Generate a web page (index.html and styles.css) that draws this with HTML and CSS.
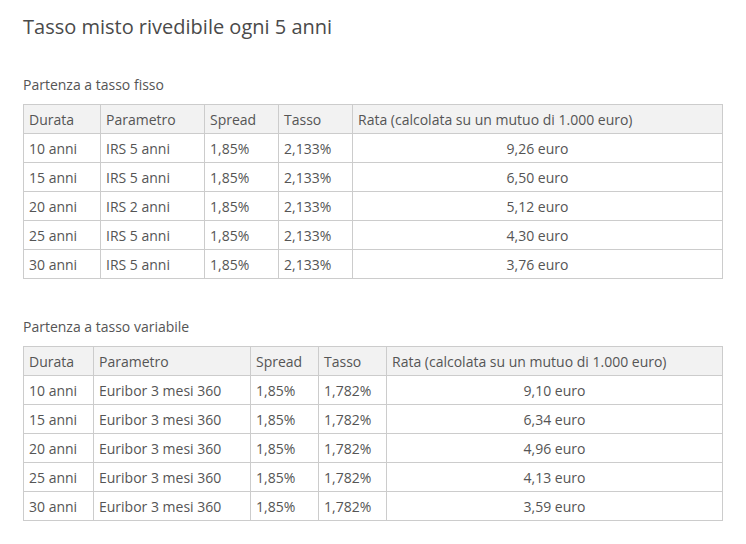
FILE: index.html
```html
<!DOCTYPE html>
<html lang="it">
<head>
<meta charset="utf-8">
<title>Tasso misto rivedibile ogni 5 anni</title>
<link rel="stylesheet" href="styles.css">
</head>
<body>
<main class="page">
  <h2 class="title">Tasso misto rivedibile ogni 5 anni</h2>

  <p class="caption caption-first">Partenza a tasso fisso</p>
  <table class="rates rates-fisso">
    <colgroup>
      <col class="c-durata"><col class="c-param"><col class="c-spread"><col class="c-tasso"><col class="c-rata">
    </colgroup>
    <thead>
      <tr><th>Durata</th><th>Parametro</th><th>Spread</th><th>Tasso</th><th>Rata (calcolata su un mutuo di 1.000 euro)</th></tr>
    </thead>
    <tbody>
      <tr><td>10 anni</td><td>IRS 5 anni</td><td>1,85%</td><td>2,133%</td><td class="num">9,26 euro</td></tr>
      <tr><td>15 anni</td><td>IRS 5 anni</td><td>1,85%</td><td>2,133%</td><td class="num">6,50 euro</td></tr>
      <tr><td>20 anni</td><td>IRS 2 anni</td><td>1,85%</td><td>2,133%</td><td class="num">5,12 euro</td></tr>
      <tr><td>25 anni</td><td>IRS 5 anni</td><td>1,85%</td><td>2,133%</td><td class="num">4,30 euro</td></tr>
      <tr><td>30 anni</td><td>IRS 5 anni</td><td>1,85%</td><td>2,133%</td><td class="num">3,76 euro</td></tr>
    </tbody>
  </table>

  <p class="caption caption-second">Partenza a tasso variabile</p>
  <table class="rates rates-variabile">
    <colgroup>
      <col class="c-durata"><col class="c-param"><col class="c-spread"><col class="c-tasso"><col class="c-rata">
    </colgroup>
    <thead>
      <tr><th>Durata</th><th>Parametro</th><th>Spread</th><th>Tasso</th><th>Rata (calcolata su un mutuo di 1.000 euro)</th></tr>
    </thead>
    <tbody>
      <tr><td>10 anni</td><td>Euribor 3 mesi 360</td><td>1,85%</td><td>1,782%</td><td class="num">9,10 euro</td></tr>
      <tr><td>15 anni</td><td>Euribor 3 mesi 360</td><td>1,85%</td><td>1,782%</td><td class="num">6,34 euro</td></tr>
      <tr><td>20 anni</td><td>Euribor 3 mesi 360</td><td>1,85%</td><td>1,782%</td><td class="num">4,96 euro</td></tr>
      <tr><td>25 anni</td><td>Euribor 3 mesi 360</td><td>1,85%</td><td>1,782%</td><td class="num">4,13 euro</td></tr>
      <tr><td>30 anni</td><td>Euribor 3 mesi 360</td><td>1,85%</td><td>1,782%</td><td class="num">3,59 euro</td></tr>
    </tbody>
  </table>
</main>
</body>
</html>
```

FILE: styles.css
```css
html, body {
  margin: 0;
  padding: 0;
  background: #ffffff;
}

body {
  font-family: "Open Sans", "Liberation Sans", sans-serif;
  color: #555555;
}

.page {
  padding: 13px 23px 0 23px;
}

.title {
  margin: 0;
  font-size: 20px;
  font-weight: 400;
  line-height: 28px;
  color: #4a4a4a;
}

.caption {
  margin: 0;
  font-size: 14px;
  line-height: 20px;
  color: #555555;
}

.caption-first {
  margin-top: 34px;
  margin-bottom: 9px;
}

.caption-second {
  margin-top: 38px;
  margin-bottom: 9px;
}

.rates {
  border-collapse: collapse;
  table-layout: fixed;
  width: 700px;
  font-size: 14px;
  color: #555555;
}

.rates th,
.rates td {
  border: 1px solid #cccccc;
  height: 29px;
  padding: 0 5px;
  box-sizing: border-box;
  text-align: left;
  font-weight: 400;
  white-space: nowrap;
  line-height: 19px;
}

.rates th {
  background: #f2f2f2;
}

.rates td.num {
  text-align: center;
}

.rates-fisso .c-durata { width: 77px; }
.rates-fisso .c-param { width: 104px; }
.rates-fisso .c-spread { width: 74px; }
.rates-fisso .c-tasso { width: 74px; }
.rates-fisso .c-rata { width: 370px; }

.rates-variabile .c-durata { width: 70px; }
.rates-variabile .c-param { width: 157px; }
.rates-variabile .c-spread { width: 68px; }
.rates-variabile .c-tasso { width: 68px; }
.rates-variabile .c-rata { width: 336px; }
```
